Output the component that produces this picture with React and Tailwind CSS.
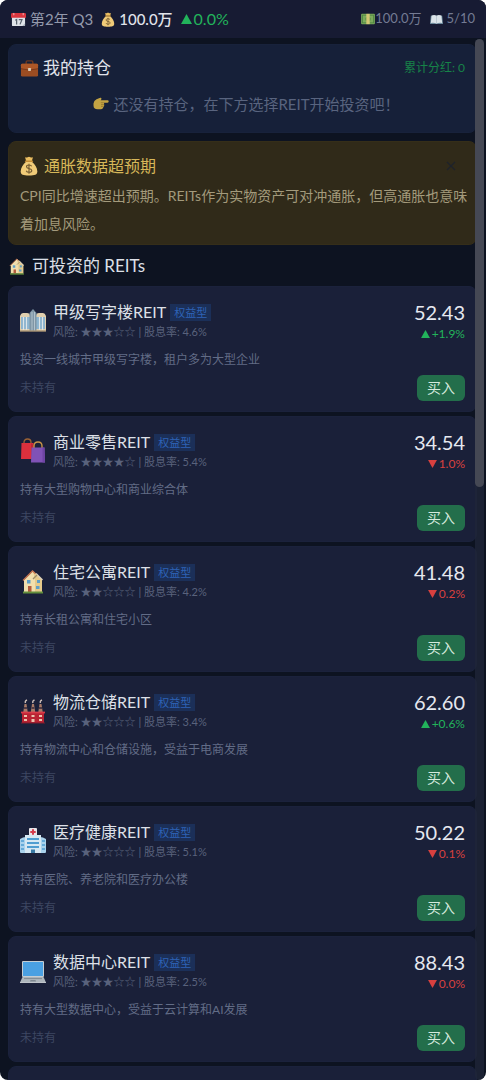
import { useState } from 'react';

const reits = [
    { id: 'office', icon: OfficeIcon, name: '甲级写字楼REIT', risk: 3, dividend: '4.6%', price: '52.43', change: '+1.9%', up: true, desc: '投资一线城市甲级写字楼，租户多为大型企业' },
    { id: 'retail', icon: BagsIcon, name: '商业零售REIT', risk: 4, dividend: '5.4%', price: '34.54', change: '1.0%', up: false, desc: '持有大型购物中心和商业综合体' },
    { id: 'apartment', icon: HouseIcon, name: '住宅公寓REIT', risk: 2, dividend: '4.2%', price: '41.48', change: '0.2%', up: false, desc: '持有长租公寓和住宅小区' },
    { id: 'logistics', icon: FactoryIcon, name: '物流仓储REIT', risk: 2, dividend: '3.4%', price: '62.60', change: '+0.6%', up: true, desc: '持有物流中心和仓储设施，受益于电商发展' },
    { id: 'medical', icon: HospitalIcon, name: '医疗健康REIT', risk: 2, dividend: '5.1%', price: '50.22', change: '0.1%', up: false, desc: '持有医院、养老院和医疗办公楼' },
    { id: 'data', icon: LaptopIcon, name: '数据中心REIT', risk: 3, dividend: '2.5%', price: '88.43', change: '0.0%', up: false, desc: '持有大型数据中心，受益于云计算和AI发展' }
];

/* ---------- Icons ---------- */

function CalendarIcon({ className }) {
    return (
        <svg viewBox="0 0 16 16" className={className} aria-hidden="true">
            <rect x="1" y="2" width="14" height="13" rx="1" fill="#dfe3e8" />
            <path d="M0 2.5Q0 1 1.5 1h13Q16 1 16 2.5V6H0z" fill="#d9363e" />
            <path d="M3 1v2.5M13 1v2.5" stroke="#f1b5b8" strokeWidth="1" />
            <path d="M4.5 8.8L6 8v5.2M8.3 8.2h3.4L9.6 13.2" fill="none" stroke="#59636d" strokeWidth="1.3" />
            <path d="M12 15l3-3v3z" fill="#a9b2bb" />
        </svg>
    );
}

function MoneyBagIcon({ className }) {
    return (
        <svg viewBox="0 0 18 20" className={className} aria-hidden="true">
            <path d="M5 1.2Q7 2 9 .8q2 1.2 4 .4L11.8 5H6.2z" fill="#e9bd60" />
            <path d="M6.3 5.5C3 8 .7 12 .7 15.5.7 18.6 3 19.5 9 19.5s8.3-.9 8.3-4c0-3.5-2.3-7.5-5.6-10z" fill="#f0cb78" />
            <path d="M5.5 5.2h7" stroke="#c28c36" strokeWidth="1.4" strokeLinecap="round" />
            <path d="M11.7 10.3c-.5-1-1.5-1.3-2.7-1.3-1.4 0-2.5.6-2.5 1.8 0 2.6 5.3 1 5.3 3.6 0 1.3-1.2 1.900-2.700 1.900-1.400 0-2.500-.5-2.900-1.600M9 7.700v10" fill="none" stroke="#725a31" strokeWidth="1.1" />
        </svg>
    );
}

function BanknoteIcon({ className }) {
    return (
        <svg viewBox="0 0 16 14" className={className} aria-hidden="true">
            <rect x="0" y="1" width="16" height="12" rx="1" fill="#7cab5c" />
            <rect x="1.5" y="2.5" width="13" height="9" fill="none" stroke="#4f8742" />
            <circle cx="8" cy="7" r="3" fill="#4f8742" />
            <rect x="6" y="1" width="4" height="12" fill="#d3c774" />
        </svg>
    );
}

function BookIcon({ className }) {
    return (
        <svg viewBox="0 0 16 13" className={className} aria-hidden="true">
            <path d="M1 2h14l1 10H0z" fill="#6c8a9c" />
            <path d="M2 1.5Q5.5 0 8 1.8 10.5 0 14 1.5l1 9.200q-4-.8-7 .8-3-1.600-7-.8z" fill="#dbe4e9" />
            <path d="M8 2v9.300" stroke="#b4c3cc" />
        </svg>
    );
}

function BriefcaseIcon({ className }) {
    return (
        <svg viewBox="0 0 20 20" className={className} aria-hidden="true">
            <path d="M6.5 6V3.2Q6.5 2 7.7 2h4.6q1.2 0 1.2 1.2V6" fill="none" stroke="#6d3820" strokeWidth="1.5" />
            <rect x="1" y="5" width="18" height="13.5" rx="1.5" fill="#9c4d22" />
            <path d="M1 6.5Q1 5 2.5 5h15Q19 5 19 6.5V10q-9 3-18 0z" fill="#ad5727" />
            <path d="M1 10.2q9 3 18 0" fill="none" stroke="#6d3219" strokeWidth=".8" />
            <rect x="8.5" y="9.5" width="3" height="3" rx=".5" fill="#dbcdb8" />
        </svg>
    );
}

function PointIcon({ className }) {
    return (
        <svg viewBox="0 0 16 14" className={className} aria-hidden="true">
            <path d="M.5 6.500Q.8 3.500 3.500 2.300L7.200.8q1.600-.2 1.200 1.400L7.600 3.300H14.600q1.100.1 1.100 1.200t-1.100 1.200H10.600q.9.700.5 1.700.5 1-.3 1.700.2 1-.7 1.500-.2 1.700-2 1.700H4.500Q.5 12.300.5 8.500z" fill="#c3a343" />
            <path d="M10.600 5.700H7.800M11 7.600H8M10.600 9.400H8" stroke="#8e702a" strokeWidth=".7" />
        </svg>
    );
}

function HouseIcon({ className }) {
    return (
        <svg viewBox="0 0 26 26" className={className} aria-hidden="true">
            <path d="M4 12l9-9 9 9v12H4z" fill="#f1dfae" />
            <path d="M13 3l9 8.5V24h-7V12z" fill="#e6ca8b" />
            <path d="M3 12.5L12.5 3l3 2.8" fill="none" stroke="#c67551" strokeWidth="1.3" />
            <path d="M16 5.5L22.5 12" stroke="#ddd1b9" strokeWidth="1.5" />
            <path d="M13 11l4-4" stroke="#9e8e68" strokeWidth="1.3" />
            <rect x="7" y="12" width="3.5" height="3.5" fill="#5e9fc7" />
            <rect x="17" y="12" width="3" height="3" fill="#5e9fc7" />
            <rect x="16" y="18" width="3.5" height="3" fill="#5e9fc7" />
            <rect x="8" y="18" width="3.5" height="6" fill="#b25a3c" />
            <path d="M3 24.5h20" stroke="#638f3d" strokeWidth="2" />
        </svg>
    );
}

function OfficeIcon({ className }) {
    return (
        <svg viewBox="0 0 26 26" className={className} aria-hidden="true">
            <path d="M0 8q1-3 3-3h4q3 0 3 3v15H0zM16 8q0-3 3-3h4q2 0 3 3v15H16z" fill="#e0cfae" />
            <path d="M1 9h9v12H1zM16 9h9v12h-9z" fill="#8db5cf" />
            <path d="M3.5 9v13M6.5 9v13M19.5 9v13M22.5 9v13" stroke="#dce5e9" strokeWidth="1.1" />
            <path d="M9.5 5L13 1l3.5 4v18h-7z" fill="#7f96a6" />
            <path d="M12 4v19M14.5 4v19" stroke="#b8c8d1" strokeWidth=".9" />
            <path d="M0 23h26" stroke="#ad9574" strokeWidth="1.4" />
        </svg>
    );
}

function BagsIcon({ className }) {
    return (
        <svg viewBox="0 0 26 26" className={className} aria-hidden="true">
            <path d="M4 6V4.5Q4 1 7.500 1T11 4.500V6" fill="none" stroke="#9b6235" strokeWidth="1.3" />
            <path d="M1.500 5h12V21H1z" fill="#db303d" />
            <path d="M11 5l2.500 2V21H11z" fill="#c02636" />
            <path d="M14 10V8q0-4 4-4t4 4v2" fill="none" stroke="#c99548" strokeWidth="1.4" />
            <path d="M11.500 9.500h13L25 24.500H11z" fill="#8052b6" />
            <path d="M22.500 9.500h2L25 24.500h-2.500z" fill="#6f44a4" />
        </svg>
    );
}

function FactoryIcon({ className }) {
    return (
        <svg viewBox="0 0 26 26" className={className} aria-hidden="true">
            <path d="M4.5 6h2L8 16H3zM12 6h2l1.500 10h-5zM19.500 6h2L23 16h-5z" fill="#a77b68" />
            <path d="M4 10h3M11.500 10h3M19 10h3" stroke="#513c44" strokeWidth="2" />
            <path d="M5.500 5q-1-2 1.500-3M13 5q-1-2 1.500-3M20.500 5q-1-2 1.500-3" fill="none" stroke="#cdbfb9" strokeWidth="1.4" />
            <path d="M2 14h22v11H2z" fill="#b92332" />
            <path d="M1 14.500h24" stroke="#da3b49" strokeWidth="1.8" />
            <path d="M4 17h3v2H4zM11.500 17h3v2h-3zM19 17h3v2h-3zM4 21h3v2H4zM11.500 21h3v3h-3zM19 21h3v2h-3z" fill="#ecc3ae" />
            <path d="M1 25h24" stroke="#7b1a2c" strokeWidth="1" />
        </svg>
    );
}

function HospitalIcon({ className }) {
    return (
        <svg viewBox="0 0 26 26" className={className} aria-hidden="true">
            <rect x="9" y="0" width="8" height="8" rx="1" fill="#e8e5e9" />
            <path d="M13 1.300v5.400M10.300 4h5.400" stroke="#d43c4c" strokeWidth="2" />
            <path d="M0 11q3-2 6-2v16H1q-1 0-1-1zM26 11q-3-2-6-2v16h5q1 0 1-1z" fill="#a9d2ec" />
            <path d="M5 7h16v18H5z" fill="#d5e8f3" />
            <path d="M7 11h12M7 15h12M7 19h12" stroke="#4e9dd1" strokeWidth="2" />
            <path d="M1 13h3M1 17h3M1 21h3M22 13h3M22 17h3M22 21h3" stroke="#4e9dd1" strokeWidth="1.6" />
            <rect x="11" y="21.500" width="4" height="3.500" fill="#397aa5" />
        </svg>
    );
}

function LaptopIcon({ className }) {
    return (
        <svg viewBox="0 0 26 26" className={className} aria-hidden="true">
            <rect x="2" y="3" width="22" height="16" rx="1" fill="#c5cdd3" />
            <rect x="3" y="4" width="20" height="14" fill="#4aa0e2" />
            <path d="M2.500 19h21L26 24.500H0z" fill="#aeb6bc" />
            <path d="M4 20.500h18" stroke="#858e96" strokeWidth="1.2" />
            <path d="M10.500 22h5l.5 1.500h-6z" fill="#7e8790" />
            <path d="M0 24.500h26" stroke="#d7dbde" strokeWidth=".8" />
        </svg>
    );
}

function Trend({ up, className }) {
    return (
        <svg viewBox="0 0 10 9" className={className} aria-hidden="true">
            <path d={up ? 'M5 0l5 9H0z' : 'M0 0h10L5 9z'} fill="currentColor" />
        </svg>
    );
}

/* ---------- Components ---------- */

function ReitCard({ reit }) {
    const Icon = reit.icon;

    return (
        <li className="rounded-lg border border-[#1b223c] bg-[#1a2039] px-[11px] pt-[13px] pb-2.5">
            <div className="flex justify-between">
                <div className="flex gap-[7px]">
                    <Icon className="mt-2 size-[26px]" />
                    <div>
                        <div className="flex items-center gap-1">
                            <h3 className="text-base leading-6 text-[#dde0e8]">{reit.name}</h3>
                            <span className="bg-[#1b2f58] px-1 text-[11px] leading-[17px] text-[#2e63b6]">权益型</span>
                        </div>
                        <p className="text-[11px] leading-4 text-[#59627c]">
                            风险: {'★'.repeat(reit.risk)}{'☆'.repeat(5 - reit.risk)} | 股息率: {reit.dividend}
                        </p>
                    </div>
                </div>
                <div className="text-right">
                    <div className="text-xl leading-6 text-[#e6e8ef]">{reit.price}</div>
                    <div className={`flex items-center justify-end gap-0.5 text-xs leading-5 ${reit.up ? 'text-[#22b35b]' : 'text-[#d8403f]'}`}>
                        <Trend up={reit.up} className="h-2 w-[9px]" />
                        <span>{reit.change}</span>
                    </div>
                </div>
            </div>
            <p className="mt-[7px] text-xs leading-[18px] text-[#626c86]">{reit.desc}</p>
            <div className="mt-1.5 flex items-center justify-between">
                <span className="text-xs text-[#3d4762]">未持有</span>
                <button type="button" className="rounded-md bg-[#236e4b] px-2.5 text-sm leading-[26px] text-[#d5e9dd]">
                    买入
                </button>
            </div>
        </li>
    );
}

export default function App() {
    const [showNews, setShowNews] = useState(true);

    return (
        <div className="h-screen bg-white font-['Lato','Noto_Sans_CJK_SC',sans-serif]">
            <div className="relative flex h-full flex-col overflow-hidden rounded-lg bg-[#0d1321]">
                <header className="flex h-[38px] shrink-0 items-center justify-between bg-[#171b33] px-[11px]">
                    <div className="flex items-center text-[15px]">
                        <CalendarIcon className="mr-1 size-[15px]" />
                        <span className="mr-2 text-[#9399ab]">第2年 Q3</span>
                        <MoneyBagIcon className="mr-1 h-[15px] w-[14px]" />
                        <span className="mr-2 font-medium text-[#e0e3ea]">100.0万</span>
                        <span className="flex items-center gap-0.5 text-base text-[#22b35b]">
                            <Trend up className="h-[10px] w-[11px]" />
                            0.0%
                        </span>
                    </div>
                    <div className="flex items-center text-[13px] text-[#747b93]">
                        <BanknoteIcon className="h-3 w-[14px]" />
                        <span className="mr-2">100.0万</span>
                        <BookIcon className="mr-1 h-[11px] w-[13px]" />
                        <span>5/10</span>
                    </div>
                </header>

                <main className="min-h-0 flex-1 overflow-hidden pt-1.5 pr-[9px] pl-2">
                    {/* Holdings */}
                    <section className="rounded-lg border border-[#18223b] bg-[#162039] px-[11px] pt-[11px] pb-[17px]">
                        <div className="flex items-center justify-between">
                            <h2 className="flex items-center gap-1 text-[17px] leading-6 text-[#e0e3ea]">
                                <BriefcaseIcon className="size-[19px]" />
                                我的持仓
                            </h2>
                            <span className="text-xs text-[#168348]">累计分红: 0</span>
                        </div>
                        <p className="mt-[13px] flex items-center justify-center gap-1 pl-2 text-[15px] leading-[22px] text-[#59647f]">
                            <PointIcon className="h-[14px] w-4" />
                            还没有持仓，在下方选择REIT开始投资吧！
                        </p>
                    </section>

                    {/* Market news */}
                    {showNews && (
                        <section className="mt-2 rounded-lg border border-[#352e19] bg-[#302a19] pt-3 pr-1 pb-1.5 pl-[11px]">
                            <div className="flex items-center justify-between pr-[15px]">
                                <h2 className="flex items-center gap-1.5 text-base leading-6 text-[#d6b759]">
                                    <MoneyBagIcon className="h-5 w-[18px]" />
                                    通胀数据超预期
                                </h2>
                                <button type="button" aria-label="关闭" onClick={() => setShowNews(false)} className="text-[#1d222b]">
                                    <svg viewBox="0 0 12 12" className="size-3" aria-hidden="true">
                                        <path d="M2 2l8 8M10 2l-8 8" stroke="currentColor" strokeWidth="1.2" />
                                    </svg>
                                </button>
                            </div>
                            <p className="mt-1 text-sm leading-7 text-[#a39a7c]">
                                CPI同比增速超出预期。REITs作为实物资产可对冲通胀，但高通胀也意味着加息风险。
                            </p>
                        </section>
                    )}

                    {/* REIT list */}
                    <h2 className="mt-[9px] mb-2 flex items-center gap-1.5 text-[17px] leading-6 text-[#dde0e8]">
                        <HouseIcon className="size-[18px]" />
                        可投资的 REITs
                    </h2>
                    <ul className="flex flex-col gap-1">
                        {reits.map((reit) => (
                            <ReitCard key={reit.id} reit={reit} />
                        ))}
                        <li className="h-32 rounded-lg border border-[#1b223c] bg-[#1a2039]" />
                    </ul>
                </main>

                {/* Scrollbar lying over the right edge of the list */}
                <div className="absolute top-[39px] right-0.5 bottom-0 w-[9px] rounded-full bg-[#1f2538]/80">
                    <div className="h-[43%] rounded-full bg-[#454854]" />
                </div>
            </div>
        </div>
    );
}
